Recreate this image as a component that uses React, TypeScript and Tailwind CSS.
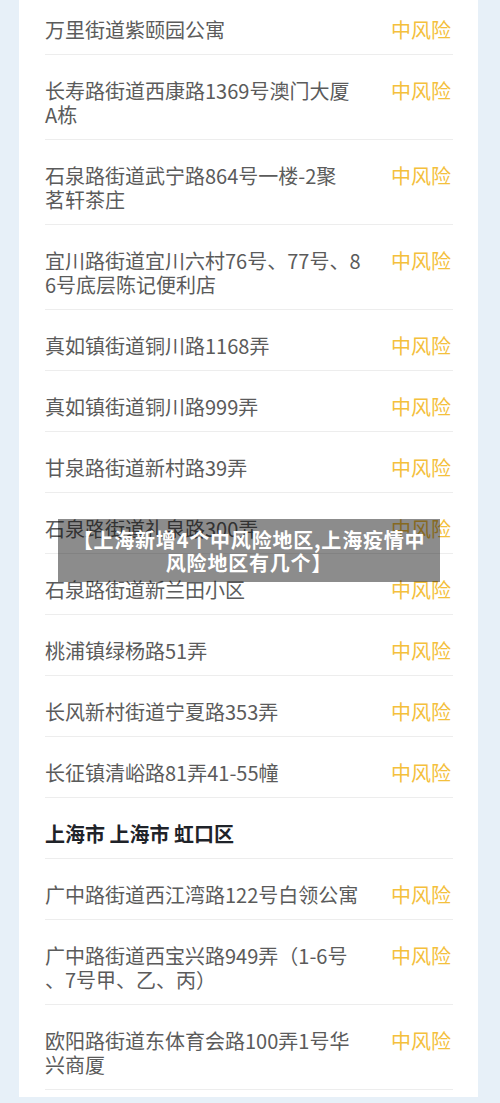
const rows: { lines: string[]; risk?: boolean; header?: boolean }[] = [
  { lines: ["万里街道紫颐园公寓"], risk: true },
  { lines: ["长寿路街道西康路1369号澳门大厦", "A栋"], risk: true },
  { lines: ["石泉路街道武宁路864号一楼-2聚", "茗轩茶庄"], risk: true },
  { lines: ["宜川路街道宜川六村76号、77号、8", "6号底层陈记便利店"], risk: true },
  { lines: ["真如镇街道铜川路1168弄"], risk: true },
  { lines: ["真如镇街道铜川路999弄"], risk: true },
  { lines: ["甘泉路街道新村路39弄"], risk: true },
  { lines: ["石泉路街道礼泉路300弄"], risk: true },
  { lines: ["石泉路街道新兰田小区"], risk: true },
  { lines: ["桃浦镇绿杨路51弄"], risk: true },
  { lines: ["长风新村街道宁夏路353弄"], risk: true },
  { lines: ["长征镇清峪路81弄41-55幢"], risk: true },
  { lines: ["上海市 上海市 虹口区"], header: true },
  { lines: ["广中路街道西江湾路122号白领公寓"], risk: true },
  { lines: ["广中路街道西宝兴路949弄（1-6号", "、7号甲、乙、丙）"], risk: true },
  { lines: ["欧阳路街道东体育会路100弄1号华", "兴商厦"], risk: true },
];

export default function App() {
  return (
    <div
      className="relative h-[1103px] overflow-hidden bg-[#e7f0f8] pl-[19px] pr-[22px]"
      style={{ fontFamily: '"Noto Sans CJK SC", "Noto Sans", sans-serif' }}
    >
      <div className="h-full bg-white pl-[26px] pr-[25px]">
        <ul className="-mt-[6px]">
          {rows.map((row, i) => (
            <li
              key={i}
              className="flex items-start justify-between border-b border-[#ededed] pt-[24px] pb-[12px] text-[20px] leading-[24px]"
            >
              <div
                className={
                  row.header
                    ? "whitespace-nowrap font-bold text-[#1f2329]"
                    : "whitespace-nowrap text-[#5b5b5b]"
                }
              >
                {row.lines.map((l, j) => (
                  <div key={j}>{l}</div>
                ))}
              </div>
              {row.risk && (
                <span className="mr-[2px] whitespace-nowrap text-[#f4c03c]">中风险</span>
              )}
            </li>
          ))}
        </ul>
      </div>

      {/* caption over the list */}
      <div className="absolute left-[58px] top-[519px] flex h-[63px] w-[382px] items-center justify-center bg-black/45 px-[8px] text-center text-[20px] font-bold leading-[23px] tracking-[0.8px] text-white">
        <p>
          【上海新增4个中风险地区,上海疫情中
          <br />
          风险地区有几个】
        </p>
      </div>
    </div>
  );
}
